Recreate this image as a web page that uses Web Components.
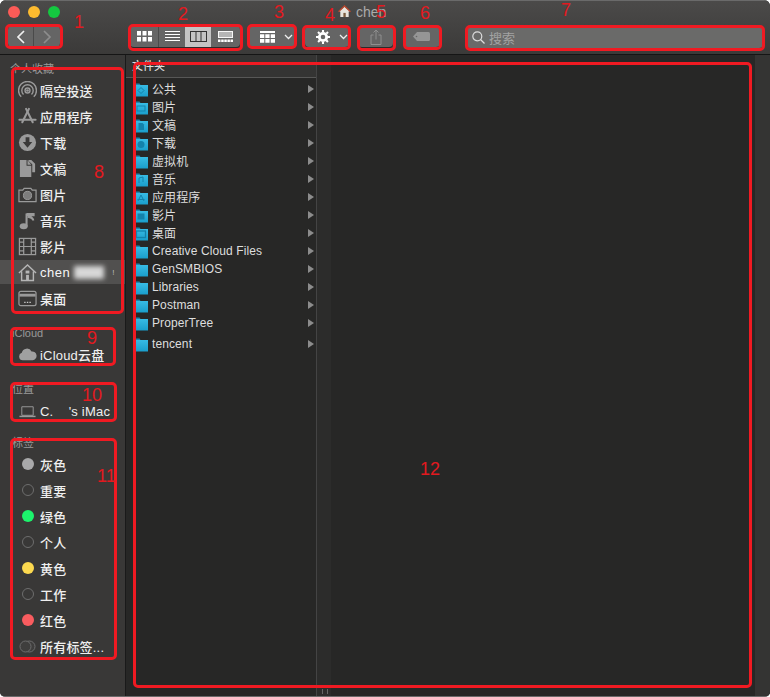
<!DOCTYPE html>
<html lang="zh">
<head>
<meta charset="utf-8">
<title>Finder</title>
<style>
  html, body { margin: 0; background: #fff; }
  body { width: 770px; height: 697px; overflow: hidden; font-family: "Liberation Sans", "Noto Sans CJK SC", sans-serif; }
</style>
</head>
<body>
<finder-window>
  <finder-toolbar slot="toolbar"></finder-toolbar>
  <finder-sidebar slot="sidebar"></finder-sidebar>
  <finder-columns slot="content"></finder-columns>
</finder-window>
<mark-layer></mark-layer>

<script>
const ICONS = {
  airdrop: `<g fill="none" stroke="#9a9a9a" stroke-width="1.5"><circle cx="10" cy="10" r="2.6"/><path d="M5.8 14.2a6 6 0 1 1 8.4 0"/><path d="M3.4 16.6a9.4 9.4 0 1 1 13.2 0"/></g><circle cx="10" cy="10" r="1.4" fill="#9a9a9a"/>`,
  apps: `<g stroke="#9a9a9a" stroke-width="2.2" stroke-linecap="round" fill="none"><path d="M8.500 2l7 14"/><path d="M11.500 2l-7 14"/><path d="M1.500 13.500h17"/></g>`,
  downloads: `<circle cx="10" cy="10" r="9" fill="#9a9a9a"/><path d="M8 4.500h4v5h3l-5 6-5-6h3z" fill="#3a3938"/>`,
  docs: `<path d="M2 1h7v6h5v12H2z" fill="#9a9a9a"/><path d="M10 1l4 5h-4z" fill="#9a9a9a"/><path d="M11 1h3l4 4v9h-3V5.500L11 2z" fill="#9a9a9a"/>`,
  photos: `<path d="M1 5.500h4l1.500-2h7l1.500 2h4v12H1z" fill="none" stroke="#9a9a9a" stroke-width="1.300"/><circle cx="10" cy="11" r="4.300" fill="#7d7d7d" stroke="#9a9a9a"/>`,
  music: `<path d="M9 16V2.500c0 2.500 7 3 7 7.500 0-3-4-3.500-5.500-4" fill="none" stroke="#9a9a9a" stroke-width="2.200"/><path d="M9 2h8.500v3.500H9z" fill="#9a9a9a"/><ellipse cx="6" cy="16" rx="4.200" ry="3.200" fill="#9a9a9a"/>`,
  movies: `<rect x="1.500" y="1.500" width="17" height="17" fill="none" stroke="#9a9a9a" stroke-width="1.300"/><path d="M6 1.500v17M14 1.500v17M6 10h8M1.500 5.500H6M1.500 10H6M1.500 14.500H6M14 5.500h4.500M14 10h4.500M14 14.500h4.500" stroke="#9a9a9a" stroke-width="1.300"/>`,
  home: `<path d="M1 10.500L10 2l9 8.500M3.800 9v9.500h12.400V9" fill="none" stroke="#b5b5b5" stroke-width="1.500"/><rect x="8" y="8" width="4" height="3" fill="#b5b5b5"/><rect x="8.500" y="12.500" width="3" height="6" fill="#b5b5b5"/>`,
  desktop: `<rect x="1" y="2.500" width="18" height="15" rx="2" fill="none" stroke="#9a9a9a" stroke-width="1.300"/><path d="M1.500 6.500h17" stroke="#9a9a9a" stroke-width="3"/><path d="M6.500 14h1.500M9.300 14h1.500M12 14h1.500" stroke="#c8c8c8" stroke-width="1.400"/>`,
  cloud: `<path d="M5 16a4 4 0 0 1-1-7.800A5.500 5.500 0 0 1 14.300 6.800 4.600 4.600 0 0 1 15.500 16z" fill="#a0a0a0"/>`,
  mac: `<path d="M4 5h12v9H4z" fill="none" stroke="#9a9a9a" stroke-width="1"/><path d="M1.500 15.200h17" stroke="#9a9a9a" stroke-width="1.500"/>`
};

const glyph = (name, size = 20) => `<svg width="${size}" height="${size}" viewBox="0 0 20 20">${ICONS[name]}</svg>`;

class FinderWindow extends HTMLElement {
  constructor() {
    super();
    this.attachShadow({ mode: "open" }).innerHTML = `
    <style>
      :host {
        display: grid;
        grid-template-columns: 126px 1fr;
        grid-template-rows: 55px 1fr;
        width: 770px;
        height: 697px;
        box-sizing: border-box;
        border-bottom: 1px solid #6a6a6a;
        border-radius: 6px 6px 5px 5px;
        overflow: hidden;
        background: #272726;
      }
      ::slotted([slot="toolbar"]) { grid-column: 1 / 3; }
    </style>
    <slot name="toolbar"></slot>
    <slot name="sidebar"></slot>
    <slot name="content"></slot>`;
  }
}

class FinderToolbar extends HTMLElement {
  constructor() {
    super();
    this.attachShadow({ mode: "open" }).innerHTML = `
    <style>
      :host {
        display: block;
        height: 55px;
        box-sizing: border-box;
        background: linear-gradient(#4b4a49, #3b3a39);
        border-top: 1px solid #6a6a6a;
        border-bottom: 1px solid #151515;
        color: #ddd;
      }
      .top { display: flex; align-items: center; height: 21px; padding-left: 8px; }
      .light { width: 12px; height: 12px; border-radius: 50%; margin-right: 8px; }
      .title { display: flex; align-items: center; margin-left: 270px; font-size: 14px; color: #ababab; gap: 5px; }
      .bar { display: flex; align-items: flex-start; padding-left: 8px; margin-top: 4px; }
      .group {
        display: flex;
        height: 21px;
        border-radius: 4px;
        overflow: hidden;
        background: #656565;
        box-shadow: 0 1px 0 #2b2b2b;
      }
      .seg { display: flex; align-items: center; justify-content: center; border-left: 1px solid #4a4a4a; }
      .seg:first-child { border-left: 0; }
      .on { background: #c4c4c4; }
      .search {
        display: flex; align-items: center; gap: 4px;
        width: 297px; height: 22px; box-sizing: border-box; padding-left: 6px;
        background: #6a6a69; border-radius: 4px;
        color: #a2a2a2; font-size: 13px;
      }
    </style>
    <div class="top">
      <span class="light" style="background:#fc5b57"></span>
      <span class="light" style="background:#fdbb2f"></span>
      <span class="light" style="background:#14c840"></span>
      <span class="title">
        <svg width="13" height="13" viewBox="0 0 14 14"><path d="M1 7l6-5.500L13 7h-1.500v6h-9V7z" fill="#e8e4dc"/><path d="M0.500 7.200L7 1l6.500 6.200" fill="none" stroke="#b5472e" stroke-width="1.500"/><rect x="5.800" y="8.500" width="2.500" height="4.500" fill="#7a5a3c"/></svg>
        <span>chen</span>
      </span>
    </div>
    <div class="bar">
      <div class="group" style="width:52px">
        <div class="seg" style="width:25px"><svg width="10" height="14" viewBox="0 0 10 14"><path d="M8 1L2 7l6 6" fill="none" stroke="#f0f0f0" stroke-width="1.700"/></svg></div>
        <div class="seg" style="flex:1"><svg width="10" height="14" viewBox="0 0 10 14"><path d="M2 1l6 6-6 6" fill="none" stroke="#8d8d8d" stroke-width="1.700"/></svg></div>
      </div>
      <div class="group" style="width:110px;margin-left:70px">
        <div class="seg" style="width:28px"><svg width="15" height="11" viewBox="0 0 15 11" fill="#fff"><path d="M0 0h4v4.500H0zM5.500 0h4v4.500h-4zM11 0h4v4.500h-4zM0 6h4v4.500H0zM5.500 6h4v4.500h-4zM11 6h4v4.500h-4z"/></svg></div>
        <div class="seg" style="width:26px"><svg width="15" height="11" viewBox="0 0 15 11" stroke="#fff" stroke-width="1"><path d="M0 .5h15M0 3.500h15M0 6.500h15M0 9.500h15"/></svg></div>
        <div class="seg on" style="width:26px;border-left:0"><svg width="17" height="11" viewBox="0 0 17 11" fill="none" stroke="#333" stroke-width="1"><rect x=".5" y=".5" width="16" height="10"/><path d="M6 .5v10M11 .5v10"/></svg></div>
        <div class="seg" style="flex:1;border-left:0"><svg width="15" height="11" viewBox="0 0 15 11" fill="#fff"><path d="M0 0h15v7H0z" opacity=".95"/><path d="M1 1h13v5H1z" fill="#b5b5b5"/><path d="M0 8.500h2.500V11H0zM3.200 8.500h2.500V11H3.200zM6.300 8.500h2.500V11H6.300zM9.400 8.500h2.500V11H9.400zM12.500 8.500H15V11h-2.500z"/></svg></div>
      </div>
      <div class="group" style="width:47px;margin-left:8px">
        <div class="seg" style="width:30px;padding-left:4px"><svg width="15" height="12" viewBox="0 0 15 12" fill="#fff"><path d="M0 0h15v2H0zM0 3.200h4.300v3.800H0zM5.300 3.200h4.300v3.800H5.300zM10.700 3.200H15v3.800h-4.300zM0 8h4.300v3.800H0zM5.300 8h4.300v3.800H5.300zM10.700 8H15v3.800h-4.300z"/></svg></div>
        <div class="seg" style="flex:1;border-left:0"><svg width="9" height="6" viewBox="0 0 9 6"><path d="M1 1l3.500 3.500L8 1" fill="none" stroke="#eee" stroke-width="1.300"/></svg></div>
      </div>
      <div class="group" style="width:44px;margin-left:10px">
        <div class="seg" style="width:30px;padding-left:3px"><svg width="14" height="14" viewBox="0 0 14 14"><circle cx="7" cy="7" r="3.700" fill="none" stroke="#fff" stroke-width="2.800"/><path d="M7 0v14M0 7h14M2 2l10 10M12 2L2 12" stroke="#fff" stroke-width="2.100" stroke-dasharray="2.300 9.400"/></svg></div>
        <div class="seg" style="flex:1;border-left:0"><svg width="9" height="6" viewBox="0 0 9 6"><path d="M1 1l3.500 3.500L8 1" fill="none" stroke="#eee" stroke-width="1.300"/></svg></div>
      </div>
      <div class="group" style="width:35px;margin-left:9px">
        <div class="seg" style="flex:1"><svg width="12" height="16" viewBox="0 0 12 16" fill="none" stroke="#8f8f8f"><path d="M3.500 6H1v9.500h10V6H8.500M6 10.500V1M3.500 3.500L6 1l2.500 2.500"/></svg></div>
      </div>
      <div class="group" style="width:37px;margin-left:10px">
        <div class="seg" style="flex:1"><svg width="17" height="9" viewBox="0 0 17 9"><path d="M4 0h11.500A1.500 1.500 0 0 1 17 1.500v6A1.500 1.500 0 0 1 15.500 9H4L0 4.500z" fill="#959595"/><circle cx="3.500" cy="4.500" r=".8" fill="#666"/></svg></div>
      </div>
      <div class="search" style="margin-left:26px">
        <svg width="13" height="13" viewBox="0 0 13 13" fill="none" stroke="#ddd" stroke-width="1.200"><circle cx="5.300" cy="5.300" r="4.500"/><path d="M8.500 8.500l4 4"/></svg>
        <span>搜索</span>
      </div>
    </div>`;
  }
}

class SidebarSection extends HTMLElement {
  constructor() {
    super();
    this.attachShadow({ mode: "open" }).innerHTML = `
    <style>
      :host { display: block; }
      .head { height: var(--head-h, 17px); line-height: var(--head-h, 17px); padding-left: var(--head-x, 12px); font-size: 11px; font-weight: 400; color: #9a9a9a; }
    </style>
    <div class="head"></div>
    <slot></slot>`;
  }
  connectedCallback() {
    this.shadowRoot.querySelector(".head").textContent = this.getAttribute("label");
  }
}

class SidebarItem extends HTMLElement {
  constructor() {
    super();
    this.attachShadow({ mode: "open" }).innerHTML = `
    <style>
      :host {
        display: flex; align-items: center; gap: 3px;
        height: var(--item-h, 26px); padding-left: 18px;
        font-size: 13px; font-weight: 500; color: #efefef;
        letter-spacing: .2px;
        white-space: nowrap;
      }
      :host([selected]) { background: #51504f; height: 24px; margin: 1px 0; letter-spacing: .5px; color: #f6f6f6; }
      .icon { display: flex; align-items: center; justify-content: center; width: 19px; height: 20px; }
      .dot { width: 12px; height: 12px; border-radius: 50%; box-sizing: border-box; }
      .smudge { width: 30px; height: 13px; margin-left: 1px; background: #d8d8d8; filter: blur(2.500px); }
      .tail { margin-left: 5px; font-size: 8px; font-weight: 400; color: #bdbdbd; }
    </style>
    <span class="icon"></span><slot></slot>`;
  }
  connectedCallback() {
    const icon = this.shadowRoot.querySelector(".icon");
    const name = this.getAttribute("icon");
    const dot = this.getAttribute("dot");
    if (name) icon.innerHTML = glyph(name, 19);
    if (dot === "none") {
      icon.innerHTML = `<span class="dot" style="border:1px solid #6d6d6d"></span>`;
    } else if (dot === "all") {
      icon.innerHTML = `<svg width="17" height="13" viewBox="0 0 17 13" fill="#3f3e3d" stroke="#6d6d6d"><circle cx="10.500" cy="6.500" r="5.500"/><circle cx="6.500" cy="6.500" r="5.500"/></svg>`;
    } else if (dot) {
      icon.innerHTML = `<span class="dot" style="background:${dot}"></span>`;
    }
    if (this.hasAttribute("selected")) {
      const s = document.createElement("span");
      s.className = "smudge";
      const t = document.createElement("span");
      t.className = "tail";
      t.textContent = "!";
      this.shadowRoot.append(s, t);
    }
  }
}

class FinderSidebar extends HTMLElement {
  constructor() {
    super();
    this.attachShadow({ mode: "open" }).innerHTML = `
    <style>
      :host {
        display: block; overflow: hidden;
        background: #393837;
        border-right: 1px solid #1a1a1a;
        box-sizing: border-box;
        padding-top: 7px;
      }
      .first { margin-bottom: 14px; --head-h: 15px; --head-x: 10px; }
      .cloud { margin-bottom: 14px; --item-h: 25px; }
      .place { margin-bottom: 11px; }
      .tags { --head-h: 16px; }
    </style>
    <sidebar-section class="first" label="个人收藏">
      <sidebar-item icon="airdrop">隔空投送</sidebar-item>
      <sidebar-item icon="apps">应用程序</sidebar-item>
      <sidebar-item icon="downloads">下载</sidebar-item>
      <sidebar-item icon="docs">文稿</sidebar-item>
      <sidebar-item icon="photos">图片</sidebar-item>
      <sidebar-item icon="music">音乐</sidebar-item>
      <sidebar-item icon="movies">影片</sidebar-item>
      <sidebar-item icon="home" selected>chen</sidebar-item>
      <sidebar-item icon="desktop">桌面</sidebar-item>
    </sidebar-section>
    <sidebar-section class="cloud" label="iCloud">
      <sidebar-item icon="cloud">iCloud云盘</sidebar-item>
    </sidebar-section>
    <sidebar-section class="place" label="位置">
      <sidebar-item icon="mac">C.&nbsp;&nbsp;&nbsp;&nbsp;'s iMac</sidebar-item>
    </sidebar-section>
    <sidebar-section class="tags" label="标签">
      <sidebar-item dot="#a9a9aa">灰色</sidebar-item>
      <sidebar-item dot="none">重要</sidebar-item>
      <sidebar-item dot="#1cf36c">绿色</sidebar-item>
      <sidebar-item dot="none">个人</sidebar-item>
      <sidebar-item dot="#fcd94f">黄色</sidebar-item>
      <sidebar-item dot="none">工作</sidebar-item>
      <sidebar-item dot="#f95c5f">红色</sidebar-item>
      <sidebar-item dot="all">所有标签...</sidebar-item>
    </sidebar-section>`;
  }
}

const FOLDER_MARKS = {
  public: `<path d="M7 5.500l3 3-3 3-3-3z" fill="none" stroke="#1382ab"/>`,
  pics: `<rect x="3" y="6" width="8" height="5" fill="none" stroke="#1382ab"/>`,
  docs: `<path d="M4.500 5h4L10 6.500V12H4.500z" fill="#1382ab"/>`,
  down: `<circle cx="7" cy="8.500" r="3.500" fill="#1382ab"/>`,
  music: `<path d="M5 11V6l4-1v5" fill="none" stroke="#1382ab"/>`,
  apps: `<path d="M4 11l3-6 3 6M3.500 9.500h7" fill="none" stroke="#1382ab"/>`,
  movies: `<rect x="3.500" y="5.500" width="7" height="6" fill="#1382ab"/>`,
  desk: `<rect x="2.500" y="5" width="9" height="6.500" fill="none" stroke="#1382ab" stroke-width="1.300"/>`
};

class FolderRow extends HTMLElement {
  constructor() {
    super();
    this.attachShadow({ mode: "open" }).innerHTML = `
    <style>
      :host {
        display: flex; align-items: center;
        height: 18px; padding-left: 8px;
        font-size: 12px; color: #dedede;
        white-space: nowrap;
      }
      svg { flex: none; margin-right: 4px; }
      .name { flex: 1; letter-spacing: .1px; }
      :host([cjk]) .name { padding-bottom: 2px; }
      .arrow { width: 0; height: 0; margin-right: 2px; border-left: 6px solid #8c8c8c; border-top: 4px solid transparent; border-bottom: 4px solid transparent; }
    </style>
    <svg width="14" height="15" viewBox="0 0 14 15">
      <defs><linearGradient id="f" x1="0" y1="0" x2="0" y2="1"><stop offset="0" stop-color="#37bbe4"/><stop offset="1" stop-color="#1a9ecb"/></linearGradient></defs>
      <path d="M0 3V1.500h5.500L6.500 3z" fill="#1c86ad"/>
      <path d="M0 3h14v11.500H0z" fill="url(#f)"/>
      <g class="mark"></g>
    </svg>
    <span class="name"><slot></slot></span>
    <span class="arrow"></span>`;
  }
  connectedCallback() {
    const mark = this.getAttribute("mark");
    if (mark) this.shadowRoot.querySelector(".mark").innerHTML = FOLDER_MARKS[mark];
  }
}

class FinderColumns extends HTMLElement {
  constructor() {
    super();
    this.attachShadow({ mode: "open" }).innerHTML = `
    <style>
      :host { display: flex; background: #272726; }
      .col { width: 191px; box-sizing: border-box; border-right: 1px solid #444; }
      .head { height: 23px; box-sizing: border-box; padding: 5px 0 0 6px; background: #343433; border-bottom: 1px solid #575756; font-size: 11px; font-weight: 500; line-height: 13px; color: #dcdcdc; }
      .rows { padding-top: 2px; }
      .last { margin-top: 3px; }
      .strip { width: 14px; background: #2c2c2b; position: relative; }
      .grip { position: absolute; left: 5px; bottom: 2px; width: 2px; height: 5px; border-left: 1px solid #666; border-right: 1px solid #666; padding: 0 1px; }
      .blank { flex: 1; }
      .edge { width: 15px; background: #343433; }
    </style>
    <div class="col">
      <div class="head">文件夹</div>
      <div class="rows">
        <folder-row cjk mark="public">公共</folder-row>
        <folder-row cjk mark="pics">图片</folder-row>
        <folder-row cjk mark="docs">文稿</folder-row>
        <folder-row cjk mark="down">下载</folder-row>
        <folder-row cjk>虚拟机</folder-row>
        <folder-row cjk mark="music">音乐</folder-row>
        <folder-row cjk mark="apps">应用程序</folder-row>
        <folder-row cjk mark="movies">影片</folder-row>
        <folder-row cjk mark="desk">桌面</folder-row>
        <folder-row>Creative Cloud Files</folder-row>
        <folder-row>GenSMBIOS</folder-row>
        <folder-row>Libraries</folder-row>
        <folder-row>Postman</folder-row>
        <folder-row>ProperTree</folder-row>
        <folder-row class="last">tencent</folder-row>
      </div>
    </div>
    <div class="strip"><span class="grip"></span></div>
    <div class="blank"></div>
    <div class="edge"></div>`;
  }
}

// red callouts drawn over the screenshot, their place on the canvas is the content
const BOXES = [
  [5, 24, 58, 25], [128, 24, 115, 27], [247, 24, 50, 25], [302, 25, 49, 25],
  [357, 25, 39, 26], [403, 25, 39, 25], [465, 25, 300, 26], [11, 67, 113, 247],
  [10, 327, 106, 39], [10, 382, 107, 40], [10, 438, 107, 222], [133, 62, 619, 626]
];
const LABELS = [
  ["1", 74, 12], ["2", 178, 4], ["3", 274, 2], ["4", 325, 5], ["5", 376, 2], ["6", 420, 3],
  ["7", 561, 0], ["8", 94, 162], ["9", 87, 328], ["10", 82, 385], ["11", 97, 466], ["12", 420, 459]
];

class MarkLayer extends HTMLElement {
  constructor() {
    super();
    const boxes = BOXES.map(([x, y, w, h]) =>
      `<div class="box" style="left:${x}px;top:${y}px;width:${w}px;height:${h}px"></div>`).join("");
    const labels = LABELS.map(([t, x, y]) =>
      `<div class="num" style="left:${x}px;top:${y}px">${t}</div>`).join("");
    this.attachShadow({ mode: "open" }).innerHTML = `
    <style>
      :host { position: absolute; left: 0; top: 0; width: 770px; height: 697px; pointer-events: none; }
      .box { position: absolute; box-sizing: border-box; border: 3px solid #f01a22; border-radius: 5px; }
      .num { position: absolute; font: 18px/20px "Liberation Sans", sans-serif; color: #e3191f; }
    </style>
    ${boxes}${labels}`;
  }
}

customElements.define("finder-window", FinderWindow);
customElements.define("finder-toolbar", FinderToolbar);
customElements.define("sidebar-section", SidebarSection);
customElements.define("sidebar-item", SidebarItem);
customElements.define("finder-sidebar", FinderSidebar);
customElements.define("folder-row", FolderRow);
customElements.define("finder-columns", FinderColumns);
customElements.define("mark-layer", MarkLayer);
</script>
</body>
</html>
